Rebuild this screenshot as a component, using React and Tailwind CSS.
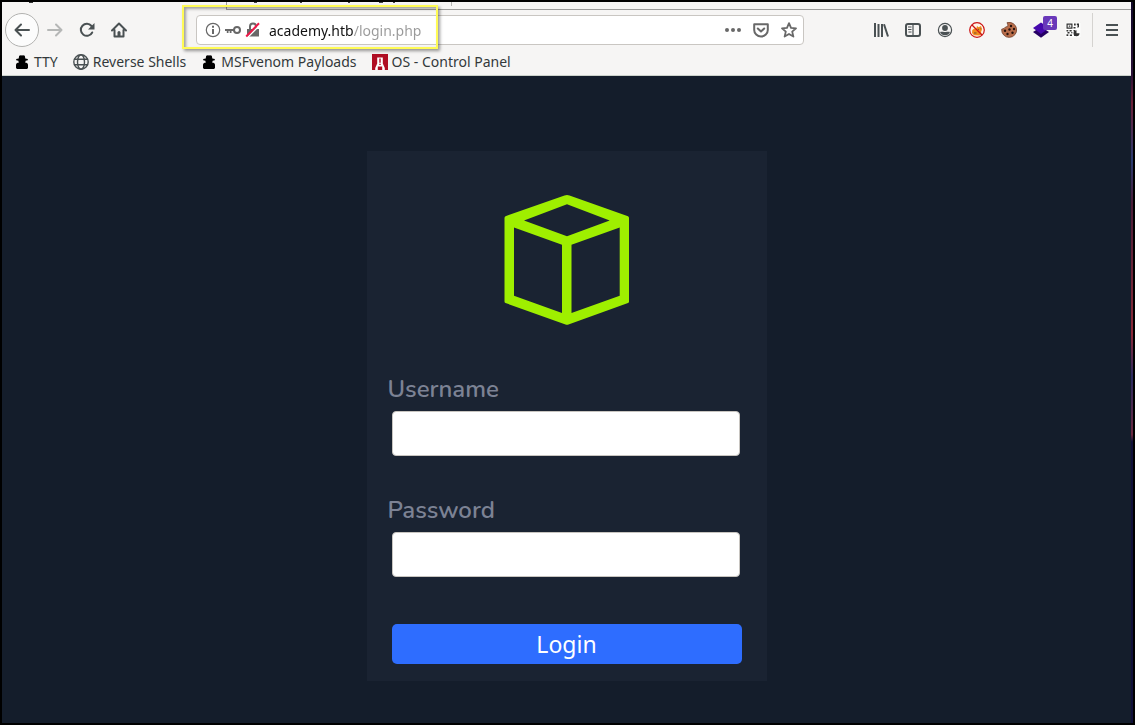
import React from "react";

const stroke = { fill: "none", stroke: "currentColor", strokeWidth: 2, strokeLinecap: "round", strokeLinejoin: "round" };

function Icon({ children, className = "size-4" }) {
  return (
    <svg viewBox="0 0 16 16" className={"shrink-0 " + className} aria-hidden="true">
      {children}
    </svg>
  );
}

function ToolButton({ label, className = "w-8 h-8", children }) {
  return (
    <button type="button" aria-label={label} className={"flex shrink-0 items-center justify-center " + className}>
      {children}
    </button>
  );
}

function Spy() {
  return (
    <Icon>
      <path
        fill="#000"
        d="M5.200 1.800Q6.500.8 8 1.400 9.500.8 10.800 1.800L11.300 4.400 13.800 5v1.200l-2.200.6c0 .8-.2 1.300-.6 1.700 2 .2 3 1 3 2.500v3l-1 1H3l-1-1v-3c0-1.500 1-2.300 3-2.500-.4-.4-.6-.9-.6-1.700L2.200 6.200V5l2.500-.6z"
      />
    </Icon>
  );
}

function Globe() {
  return (
    <Icon>
      <g {...stroke} stroke="#4a5153" strokeWidth="1.400">
        <circle cx="8" cy="8" r="7.200" />
        <ellipse cx="8" cy="8" rx="3.500" ry="7.200" />
        <path d="M1.500 5.300h13M1.500 10.700h13" />
      </g>
    </Icon>
  );
}

function ControlPanel() {
  return (
    <Icon>
      <path fill="#b00d23" d="M0 0h16v16H0z" />
      <path fill="#fff" d="M5.200 3.500h5.600v6l2 4.500v2h-2.600v-3.500H5.800V16H3.200v-2l2-4.500z" />
      <path fill="#b00d23" d="M7.300 4.500h1.400v4.200H7.300zM7.300 9.700h1.400V11H7.300z" />
    </Icon>
  );
}

function Cube() {
  return (
    <svg viewBox="0 0 126 130" className="h-[130px] w-[126px]" aria-hidden="true">
      <path
        fill="#9fef00"
        fillRule="evenodd"
        d="M60.500.5Q63-.4 65.500.5L124 21.200Q125 21.600 125 23V106.500Q125 107.600 124 108L64.500 129.500Q63 130 61.500 129.500L1.500 108Q.5 107.600.5 106.500V23Q.5 21.600 1.500 21.200zM20 25.400 63 41.300 105.700 25.400 63 9.200zM10 32.400V100.800L58 118V49.700zM67.500 49.700V118L115.700 100.800V32.400z"
      />
    </svg>
  );
}

function TabStrip() {
  return (
    <div className="flex h-2">
      <div className="w-[225px] border-r border-[#9b9b9a]">
        <svg viewBox="0 0 40 2" className="h-[2px] w-10" aria-hidden="true">
          <path fill="#333" d="M27 0h4v1h-4z" />
        </svg>
      </div>
      <div className="flex flex-1 border-b border-[#9b9b9a]">
        <div className="h-1 w-[225px] border-r border-[#b5b5b3]">
          <svg viewBox="0 0 200 2" className="h-[2px] w-[200px]" aria-hidden="true">
            <path fill="#444" d="M27 0h3v1h-3zM73 0h2v1h-2zM121 0h2v1h-2zM152 0h4v1h-4zM166 0h2v1h-2z" />
          </svg>
        </div>
      </div>
    </div>
  );
}

function NavigationBar() {
  return (
    <div className="flex h-10 items-center pl-[3px] text-[#4a5153]">
      <button
        type="button"
        aria-label="Back"
        className="flex size-[34px] shrink-0 items-center justify-center rounded-full border border-[#b2b2b0] bg-[#fcfcfc]"
      >
        <Icon><path {...stroke} d="M15 8H1.500M7 2.500 1.500 8 7 13.500" /></Icon>
      </button>
      <ToolButton label="Forward" className="h-8 w-8 text-[#b5b7b6]">
        <Icon><path {...stroke} d="M1 8h13.500M9 2.500 14.500 8 9 13.500" /></Icon>
      </ToolButton>
      <ToolButton label="Reload">
        <Icon>
          <path {...stroke} d="M13.200 10.500A6 6 0 1 1 12.500 4" />
          <path fill="currentColor" d="M15.500 1v6.500H9z" />
        </Icon>
      </ToolButton>
      <ToolButton label="Home">
        <Icon>
          <path {...stroke} d="M1 8.500 8 1.500l7 7M3.500 8v6.500h9V8" />
          <path fill="currentColor" d="M6.500 15V10.500a1.500 1.500 0 0 1 3 0V15z" />
        </Icon>
      </ToolButton>

      <div className="ml-[61px] flex h-[30px] flex-1 items-center rounded-[4px] border border-[#c9c6c2] bg-white pr-[6px] pl-2 text-[#686868]">
        <Icon>
          <circle {...stroke} strokeWidth="1.200" cx="8" cy="8" r="6.700" />
          <path fill="currentColor" d="M7 3.800h2v2H7zM7 7h2v5H7z" />
        </Icon>
        <Icon className="ml-1 size-4">
          <circle {...stroke} cx="12" cy="8" r="3" />
          <path fill="currentColor" d="M0 7h9v2H6.500v2h-1.800V9H3.500v2H1.800V9H0z" />
        </Icon>
        <Icon className="ml-1 size-4">
          <path fill="currentColor" d="M2 7h12v7.500H2z" />
          <path {...stroke} d="M5 7V4.500a3 3 0 0 1 6 0V7" />
          <path d="M2.500 15.500 15.500 2.500" stroke="#fff" strokeWidth="1.500" />
          <path d="M1.200 14.500 14 1.200" stroke="#f01848" strokeWidth="2" />
        </Icon>
        <input
          type="text"
          aria-label="Address"
          defaultValue="academy.htb/login.php"
          className="ml-2 h-6 min-w-0 flex-1 bg-[linear-gradient(to_right,#111_84px,#999_84px)] bg-clip-text text-[14px] leading-5 text-transparent outline-none"
        />
        <div className="flex gap-3">
          <button type="button" aria-label="Page actions">
            <Icon>
              <g fill="currentColor"><circle cx="2" cy="8" r="2" /><circle cx="8" cy="8" r="2" /><circle cx="14" cy="8" r="2" /></g>
            </Icon>
          </button>
          <button type="button" aria-label="Save to Pocket">
            <Icon>
              <path {...stroke} d="M1.200 2.200h13.600V8a6.800 6.500 0 0 1-13.600 0z" />
              <path {...stroke} d="M4.800 6.500 8 9.500l3.200-3" />
            </Icon>
          </button>
          <button type="button" aria-label="Bookmark this page">
            <Icon><path {...stroke} strokeWidth="1.800" d="m8 1.200 2 4.600 5 .5-3.800 3.300 1.200 5L8 12l-4.400 2.600 1.200-5L1 6.300l5-.5z" /></Icon>
          </button>
        </div>
      </div>

      <div className="ml-[61px] flex items-center">
        <ToolButton label="Library">
          <Icon><path {...stroke} strokeLinecap="butt" d="M2 1v14M5.500 2v13M9 2v13M11 2.300 15 14.500" /></Icon>
        </ToolButton>
        <ToolButton label="Sidebars">
          <Icon>
            <rect {...stroke} x="1" y="2" width="14" height="12" rx="2" />
            <path stroke="currentColor" strokeWidth="1.200" d="M8 2v12M3 5h3.500M3 7.500h3.500M3.500 10h3" />
          </Icon>
        </ToolButton>
        <ToolButton label="Account">
          <Icon>
            <circle {...stroke} strokeWidth="1.200" cx="8" cy="8" r="6.600" />
            <circle cx="8" cy="6" r="2.900" fill="currentColor" />
            <path fill="currentColor" d="M3 10c2-.5 2.800 0 5 0s3-.5 5 0c-.7 2-2.500 3.300-5 3.300S3.700 12 3 10z" />
          </Icon>
        </ToolButton>
        <ToolButton label="Proxy disabled">
          <Icon>
            <circle cx="8" cy="8" r="7" fill="#fff4e8" />
            <path fill="#f18a1b" d="m3 11 .3-3 2-1.500 2 .3L8 4l1.500 1.200 2.500-1.200 1 3.500-1 2.500.5 2-2 1.500-5.500-.3z" />
            <path stroke="#70502f" d="m9 7 1 .7M11.500 6.800l.8-.4M5 11h2.500" />
            <circle cx="8" cy="8" r="7.300" fill="none" stroke="#cc1414" strokeWidth="1.200" />
            <path stroke="#cc1414" strokeWidth="1.200" d="m3 3 10 10" />
          </Icon>
        </ToolButton>
        <ToolButton label="Cookies">
          <Icon>
            <path fill="#b86d4a" stroke="#70402c" strokeWidth=".8" d="M6 .7a7.500 7.500 0 1 1-5.300 6.500L3 6.500 4.500 5 6.500 4.500 7 3z" />
            <g fill="#27130e"><circle cx="10" cy="4" r="1.200" /><circle cx="13" cy="7" r="1.200" /><circle cx="8.500" cy="7.500" r="1.200" /><circle cx="4" cy="8.800" r="1.200" /><circle cx="11.500" cy="10.800" r="1.200" /><circle cx="6.500" cy="12" r="1.200" /></g>
          </Icon>
        </ToolButton>
        <ToolButton label="Technology profiler" className="relative h-8 w-8">
          <Icon>
            <path fill="#260064" d="m0 10 8-5 8 5-8 5.800z" />
            <path fill="#4608ad" d="M0 6 8 .5 16 6l-8 6z" />
          </Icon>
          <span className="absolute top-[2px] right-0 flex h-[14px] w-[14px] items-center justify-center rounded-[2px] bg-[#6938b9] text-[10px] leading-none text-white">4</span>
        </ToolButton>
        <ToolButton label="QR code">
          <Icon>
            <path fill="#fff" stroke="#e6e4e2" strokeWidth=".5" d="M0 0h16v16H0z" />
            <g fill="none" stroke="#333">
              <path strokeWidth="1.200" d="M2.100 2.100h4.800v4H2.100z" />
            </g>
            <path fill="#333" d="M3.800 3.500h1.500v1.200H3.800zM9 1.500h1.700v2H9zM11.800 1.500H14V5l-1.500 1v-3h-.7zM8.500 5h2v1.500h-2zM1.500 8h1.800v1.500H1.500zM4.500 8h2.200v1.500H4.500zM8.500 8H10v1.300H8.500zM2.500 10h2v1.500h-2zM1.500 12.300h1.800V14H1.500zM4.800 12.500H7V14H4.800zM6 10.300h1.500v1H6zM11.500 8.300v3h3a3 3 0 1 1-3-3zM9 12.500h1V14H9z" />
          </Icon>
        </ToolButton>
      </div>
      <div className="ml-[3px] h-[34px] border-l border-[#d5d3d0]" />
      <ToolButton label="Open menu" className="mr-[1px] h-8 w-[37px]">
        <Icon><path stroke="currentColor" strokeWidth="2" d="M2 3h12M2 8h12M2 13h12" /></Icon>
      </ToolButton>
    </div>
  );
}

function BookmarksBar() {
  const items = [
    { label: "TTY", icon: <Spy /> },
    { label: "Reverse Shells", icon: <Globe /> },
    { label: "MSFvenom Payloads", icon: <Spy /> },
    { label: "OS - Control Panel", icon: <ControlPanel /> },
  ];
  return (
    <nav aria-label="Bookmarks" className="flex h-[26px] items-center gap-[15px] border-b border-[#ccd2cb] pb-[2px] pl-3 text-[14px] leading-5 text-[#33393b]">
      {items.map((item) => (
        <a key={item.label} href="#" className="flex items-center gap-1 whitespace-nowrap">
          {item.icon}
          {item.label}
        </a>
      ))}
    </nav>
  );
}

function Field({ id, label, type }) {
  return (
    <div className="flex flex-col gap-1">
      <label htmlFor={id} className="-ml-1 font-[Nunito,'Noto_Sans',sans-serif] text-[24px] leading-9 font-semibold text-[#7c8294]">{label}</label>
      <input id={id} type={type} className="mr-[2px] h-[45px] rounded-[4px] border border-[#c8c5c0] bg-white px-3 text-[20px] text-[#222]" />
    </div>
  );
}

export default function App() {
  return (
    <div className="flex min-h-screen border-2 border-black bg-[#141d2b] font-['Noto_Sans',sans-serif]">
      <div className="flex min-w-0 flex-1 flex-col">
        <header className="relative bg-[#f6f5f4]">
          <TabStrip />
          <NavigationBar />
          <BookmarksBar />
          <div className="pointer-events-none absolute top-[3px] left-[180px] h-11 w-64 border-2 border-[#fffb55] shadow-[2px_2px_3px_rgba(0,0,0,0.4),inset_2px_2px_3px_rgba(0,0,0,0.35)]" />
        </header>
        <main className="flex flex-1 flex-col items-center pt-[75px]">
          <form className="flex w-full max-w-[400px] flex-col bg-[#1a2332] px-[25px] pt-11 pb-[17px]" onSubmit={(e) => e.preventDefault()}>
            <div className="flex justify-center pb-[46px]"><Cube /></div>
            <div className="flex flex-col gap-9">
              <Field id="username" label="Username" type="text" />
              <Field id="password" label="Password" type="password" />
            </div>
            <button type="submit" className="mt-[47px] h-10 rounded-[5px] bg-[#2e6dff] text-[23px] leading-8 text-white">Login</button>
          </form>
        </main>
      </div>
      <div className="w-[2px] shrink-0 bg-[linear-gradient(to_bottom,#11082a_0%,#2a1238_10%,#6b2038_14%,#2a3a70_22%,#4a1c38_28%,#7a2838_42%,#8b2838_46%,#2a2a60_52%,#6b2840_60%,#11103a_61%,#11103a_100%)]" />
    </div>
  );
}
